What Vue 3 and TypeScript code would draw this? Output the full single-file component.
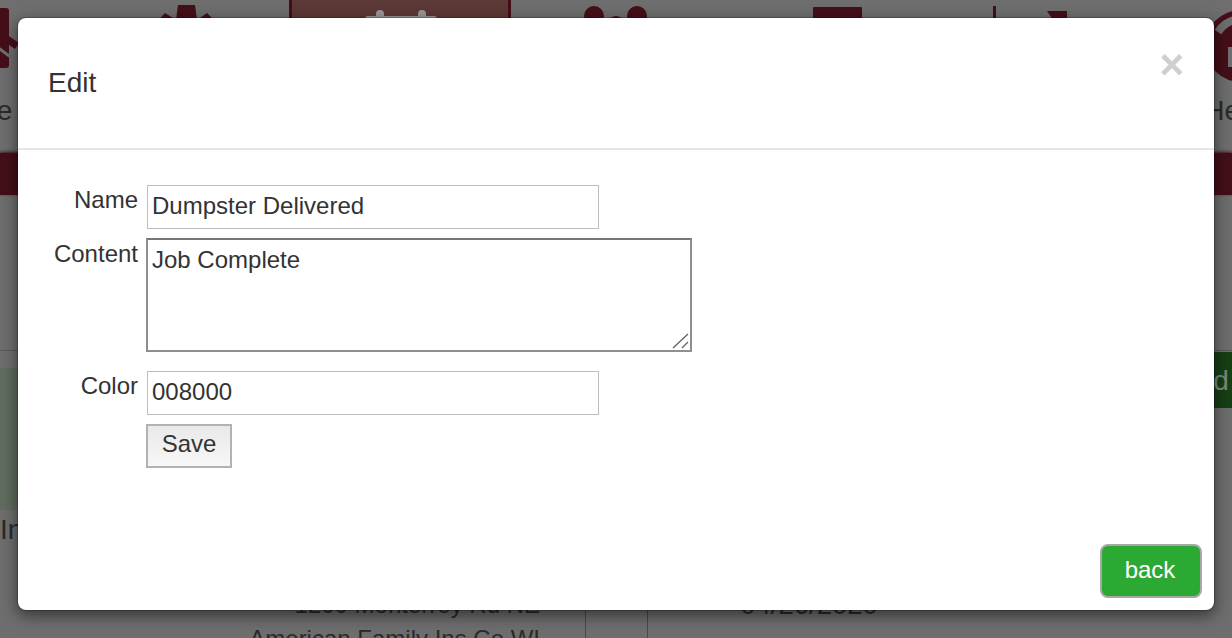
<script setup lang="ts">
import { ref } from "vue";

const name = ref<string>("Dumpster Delivered");
const content = ref<string>("Job Complete");
const color = ref<string>("008000");
</script>

<template>
  <div class="page">
    <nav class="nav">
      <div class="tab tab-home">
        <svg class="icon" viewBox="0 0 100 90" width="100" height="90">
          <rect class="ink" x="60" y="8" width="21" height="60" rx="3" />
          <path class="gap" d="M60 40 L92 64" />
          <path class="arm" d="M60 26 L89 46" />
        </svg>
        <span class="tab-label label-home">Home</span>
      </div>
      <div class="tab">
        <svg class="icon" viewBox="0 0 100 90" width="100" height="90">
          <path class="ink" d="M48 20 L50 5 H67 L69 20 L79 13 L93 27 L86 38 L100 42 V58 H16 V42 L30 38 L24 27 L37 13 Z" />
        </svg>
        <span class="tab-label">Tools</span>
      </div>
      <div class="tab tab-active">
        <svg class="icon" viewBox="0 0 100 90" width="100" height="90">
          <rect class="pale" x="15" y="16" width="72" height="56" rx="3" />
          <rect class="pale" x="26" y="10" width="8" height="16" rx="4" />
          <rect class="pale" x="68" y="10" width="8" height="16" rx="4" />
        </svg>
        <span class="tab-label">Calendar</span>
      </div>
      <div class="tab">
        <svg class="icon" viewBox="0 0 100 90" width="100" height="90">
          <circle class="ink" cx="22" cy="16" r="10" />
          <circle class="ink" cx="65" cy="16" r="10" />
          <circle class="ink" cx="44" cy="25" r="9" />
        </svg>
        <span class="tab-label">Team</span>
      </div>
      <div class="tab">
        <svg class="icon" viewBox="0 0 100 90" width="100" height="90">
          <rect class="ink" x="19" y="7" width="49" height="50" rx="1" />
        </svg>
        <span class="tab-label">Files</span>
      </div>
      <div class="tab">
        <svg class="icon" viewBox="0 0 100 90" width="100" height="90">
          <rect class="ink" x="-23" y="6" width="3" height="50" />
          <path class="ink" d="M31 11 H51 V40 Z" />
        </svg>
        <span class="tab-label">Reports</span>
      </div>
      <div class="tab tab-help">
        <svg class="icon" viewBox="0 0 100 90" width="100" height="90">
          <circle class="ink" cx="56" cy="46" r="36" />
          <path class="cut" d="M33 32 Q40 22 50 20" />
          <rect class="cut-fill" x="43" y="47" width="7" height="20" />
        </svg>
        <span class="tab-label label-help">Help</span>
      </div>
    </nav>

    <div class="band"></div>

    <section class="listing">
      <div class="listing-row">
        <div class="notice"></div>
        <div class="add-button">Add</div>
      </div>
      <div class="intro">In</div>
      <div class="table">
        <div class="cell-address">
          <div>1200 Monterrey Rd NE</div>
          <div>American Family Ins Co WI</div>
        </div>
        <div class="cell-narrow"></div>
        <div class="cell-date">04/26/2020</div>
      </div>
    </section>

    <div class="modal" role="dialog">
      <header class="modal-header">
        <h4 class="modal-title">Edit</h4>
        <button class="close" type="button">×</button>
      </header>
      <form class="modal-body" @submit.prevent>
        <label class="field-label">Name</label>
        <input v-model="name" class="field" type="text" />
        <label class="field-label field-label-area">Content</label>
        <div class="area-wrap">
          <textarea v-model="content" class="area"></textarea>
          <svg class="grip" viewBox="0 0 18 16" width="18" height="16">
            <path d="M1 15 L16 1 M10 15 L16 9" />
          </svg>
        </div>
        <label class="field-label field-label-gap">Color</label>
        <input v-model="color" class="field field-gap" type="text" />
        <button class="save" type="submit">Save</button>
      </form>
      <footer class="modal-footer">
        <button class="back" type="button">back</button>
      </footer>
    </div>
  </div>
</template>

<style>
html,
body {
  margin: 0;
  overflow: hidden;
}
</style>

<style scoped>
.page {
  position: relative;
  width: 1232px;
  height: 638px;
  overflow: hidden;
  background: #6e6e6e;
  color: #2a2a2a;
  font-family: "Liberation Sans", Arial, sans-serif;
  font-size: 24px;
}

.nav {
  display: flex;
  height: 153px;
  margin-left: -111px;
}

.tab {
  flex: 0 0 222px;
  display: flex;
  flex-direction: column;
  align-items: center;
  height: 153px;
  box-sizing: border-box;
}

.tab-home {
  flex-basis: 178px;
}

.tab-active {
  background: #5c3836;
  border-left: 3px solid #440f18;
  border-right: 3px solid #440f18;
}

.tab-help {
  flex-basis: 116px;
}

.icon {
  display: block;
  flex: none;
  overflow: visible;
}

.ink {
  fill: #440f18;
}

.arm {
  fill: none;
  stroke: #440f18;
  stroke-width: 7;
}

.gap {
  fill: none;
  stroke: #6e6e6e;
  stroke-width: 3;
}

.pale {
  fill: #9c9695;
}

.cut {
  fill: none;
  stroke: #6e6e6e;
  stroke-width: 8;
}

.cut-fill {
  fill: #6e6e6e;
}

.tab-label {
  margin-top: 5px;
  font-size: 28px;
  line-height: 32px;
  white-space: nowrap;
}

.label-home {
  margin-left: -6px;
}

.label-help {
  margin-left: -4px;
}

.band {
  height: 42px;
  background: #440f18;
  box-shadow: 0 -1px 3px #440f18;
}

.listing {
  margin-top: 155px;
  border-top: 1px solid #5a5a5a;
}

.listing-row {
  display: flex;
  justify-content: space-between;
  align-items: flex-start;
  height: 159px;
}

.notice {
  width: 18px;
  height: 142px;
  margin-top: 17px;
  background: #5f6c5e;
}

.add-button {
  box-sizing: border-box;
  width: 120px;
  height: 56px;
  margin-top: 1px;
  margin-right: -38px;
  padding: 13px 0 0 29px;
  background: #173f14;
  color: #7c8a7a;
  font-size: 28px;
  line-height: 32px;
}

.intro {
  margin-top: 4px;
  font-size: 28px;
  line-height: 32px;
}

.table {
  display: flex;
  margin-top: 42px;
}

.cell-address {
  width: 586px;
  padding-right: 45px;
  box-sizing: border-box;
  text-align: right;
  line-height: 34px;
  border-right: 1px solid #4a4a4a;
}

.cell-narrow {
  width: 61px;
  border-right: 1px solid #4a4a4a;
}

.cell-date {
  width: 322px;
  text-align: center;
  font-size: 27.5px;
  line-height: 34px;
}

.modal {
  position: absolute;
  top: 17px;
  left: 17px;
  width: 1198px;
  height: 594px;
  box-sizing: border-box;
  display: flex;
  flex-direction: column;
  background: #fff;
  background-clip: padding-box;
  border: 1px solid rgba(0, 0, 0, 0.2);
  border-radius: 9px;
  box-shadow: 0 5px 15px rgba(0, 0, 0, 0.5);
  color: #333;
}

.modal-header {
  position: relative;
  flex: none;
  height: 132px;
  box-sizing: border-box;
  padding: 47px 30px 0;
  border-bottom: 2px solid #e5e5e5;
}

.modal-title {
  margin: 0;
  font-size: 28px;
  font-weight: 400;
  line-height: 36px;
}

.close {
  position: absolute;
  top: 23px;
  right: 30px;
  padding: 0;
  border: 0;
  background: none;
  color: #cfcfcf;
  font-family: inherit;
  font-size: 42px;
  font-weight: 700;
  line-height: 48px;
}

.modal-body {
  flex: 1;
  display: grid;
  grid-template-columns: 120px 1fr;
  grid-auto-rows: min-content;
  column-gap: 8px;
  justify-items: start;
  align-content: start;
  padding-top: 35px;
}

.field-label {
  justify-self: end;
  line-height: 30px;
}

.field-label-area {
  padding-top: 1px;
}

.field-label-gap {
  margin-top: 19px;
}

.field {
  box-sizing: border-box;
  width: 452px;
  height: 44px;
  margin: 0 0 9px 1px;
  padding: 0 4px 2px;
  border: 1px solid #bdbdbd;
  border-radius: 0;
  outline: 0;
  background: #fff;
  color: #333;
  font-family: inherit;
  font-size: 24px;
}

.field-gap {
  margin-top: 19px;
}

.area-wrap {
  position: relative;
  width: 546px;
  height: 114px;
}

.area {
  box-sizing: border-box;
  display: block;
  width: 100%;
  height: 100%;
  padding: 5px 4px;
  border: 2px solid #8f8f8f;
  border-top-color: #767676;
  border-radius: 0;
  outline: 0;
  resize: none;
  color: #333;
  font-family: inherit;
  font-size: 24px;
  line-height: 30px;
}

.grip {
  position: absolute;
  right: 2px;
  bottom: 3px;
  pointer-events: none;
}

.grip path {
  fill: none;
  stroke: #666;
  stroke-width: 1.4;
}

.save {
  grid-column: 2;
  width: 86px;
  height: 44px;
  padding: 0 0 4px;
  border: 2px solid #b2b2b2;
  border-radius: 0;
  background: linear-gradient(#e9e9e9, #f7f7f7);
  color: #333;
  font-family: inherit;
  font-size: 24px;
}

.modal-footer {
  flex: none;
  display: flex;
  justify-content: flex-end;
  padding: 0 12px 12px 0;
}

.back {
  box-sizing: border-box;
  width: 102px;
  height: 54px;
  padding: 0 2px 2px 0;
  border: 2px solid #a8a8a8;
  border-radius: 8px;
  background: #2ca932;
  color: #fff;
  font-family: inherit;
  font-size: 24px;
}
</style>
